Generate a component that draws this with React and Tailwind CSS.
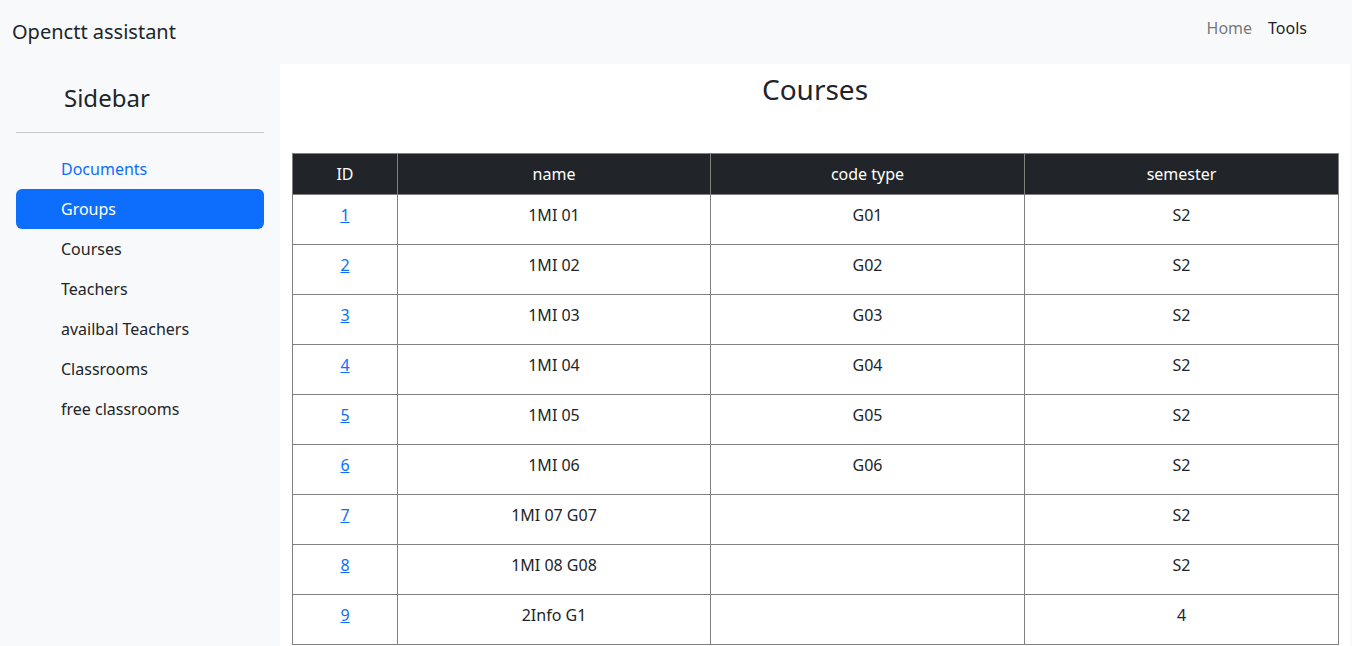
import React from "react";

const navItems = [
  { label: "Documents", kind: "link" },
  { label: "Groups", kind: "active" },
  { label: "Courses" },
  { label: "Teachers" },
  { label: "availbal Teachers" },
  { label: "Classrooms" },
  { label: "free classrooms" },
];

const rows = [
  ["1", "1MI 01", "G01", "S2"],
  ["2", "1MI 02", "G02", "S2"],
  ["3", "1MI 03", "G03", "S2"],
  ["4", "1MI 04", "G04", "S2"],
  ["5", "1MI 05", "G05", "S2"],
  ["6", "1MI 06", "G06", "S2"],
  ["7", "1MI 07 G07", "", "S2"],
  ["8", "1MI 08 G08", "", "S2"],
  ["9", "2Info G1", "", "4"],
];

export default function App() {
  return (
    <div
      className="min-h-screen bg-[#f8f9fa] text-[#212529] text-base"
      style={{ fontFamily: '"Noto Sans", "Open Sans", sans-serif' }}
    >
      <nav className="h-16 flex items-center justify-between bg-[#f8f9fa]">
        <span className="pl-3 text-[20px] leading-[30px] text-[#212529]">Openctt assistant</span>
        <div className="flex items-center gap-4 pr-[45px] -mt-2">
          <span className="text-[rgba(0,0,0,0.55)] leading-6">Home</span>
          <span className="text-[rgba(0,0,0,0.9)] leading-6">Tools</span>
        </div>
      </nav>
      <div className="flex">
        <aside className="w-[280px] shrink-0 p-4 bg-[#f8f9fa]">
          <div className="pl-12 text-[24px] leading-9">Sidebar</div>
          <hr className="my-4 border-0 border-t border-[#c5c7c9]" />
          <ul className="flex flex-col">
            {navItems.map((it) => (
              <li
                key={it.label}
                className={
                  "h-10 flex items-center pl-[45px] rounded-md leading-6 " +
                  (it.kind === "active"
                    ? "bg-[#0d6efd] text-white"
                    : it.kind === "link"
                    ? "text-[#0d6efd]"
                    : "text-[#212529]")
                }
              >
                {it.label}
              </li>
            ))}
          </ul>
        </aside>
        <main className="w-[1070px] bg-white px-3 pb-8">
          <h3 className="mt-2 text-center text-[28px] leading-[34px] font-normal text-[#212529]">Courses</h3>
          <table className="mt-[47px] w-full table-fixed border-collapse border border-[#808080]">
            <colgroup>
              <col className="w-[105px]" />
              <col className="w-[313px]" />
              <col className="w-[314px]" />
              <col className="w-[314px]" />
            </colgroup>
            <thead>
              <tr className="bg-[#212529] text-white h-[41px]">
                {["ID", "name", "code type", "semester"].map((h) => (
                  <th key={h} className="border border-[#808080] font-normal text-center align-middle leading-6">
                    {h}
                  </th>
                ))}
              </tr>
            </thead>
            <tbody>
              {rows.map((r) => (
                <tr key={r[0]} className="h-[50px]">
                  <td className="border border-[#808080] text-center align-top pt-2 leading-6">
                    <a href="#" className="text-[#0d6efd] underline">{r[0]}</a>
                  </td>
                  <td className="border border-[#808080] text-center align-top pt-2 leading-6">{r[1]}</td>
                  <td className="border border-[#808080] text-center align-top pt-2 leading-6">{r[2]}</td>
                  <td className="border border-[#808080] text-center align-top pt-2 leading-6">{r[3]}</td>
                </tr>
              ))}
            </tbody>
          </table>
        </main>
      </div>
    </div>
  );
}
